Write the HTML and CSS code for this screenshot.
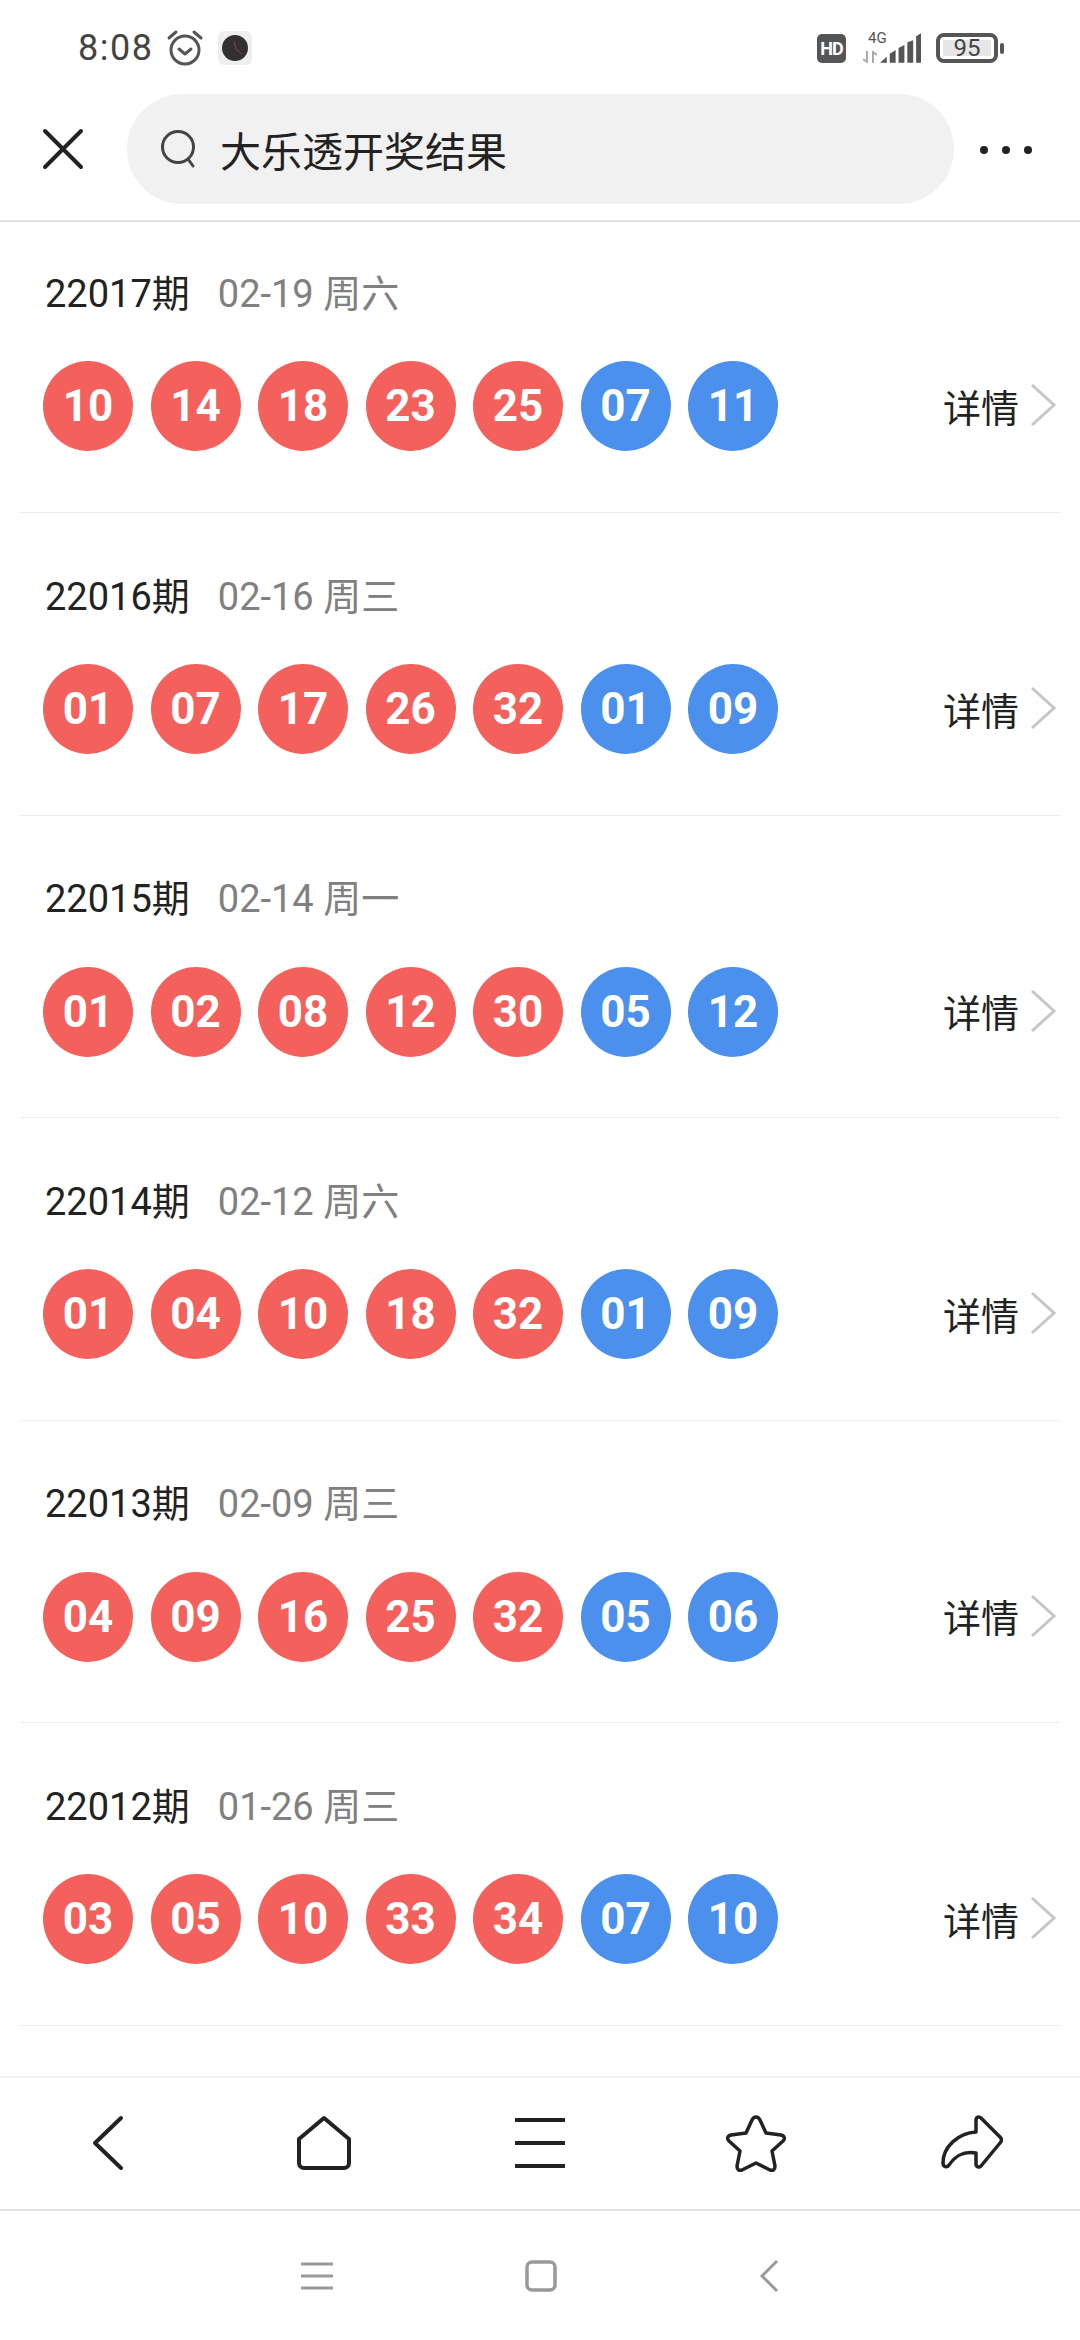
FILE: index.html
```html
<!DOCTYPE html>
<html lang="zh-CN">
<head>
    <meta charset="UTF-8">
    <meta name="viewport" content="width=device-width, initial-scale=1.0">
    <title>大乐透开奖结果</title>
    <link rel="stylesheet" href="styles.css">
</head>
<body>
    <div class="page">
        <!-- Status bar -->
        <div class="status-bar">
            <div class="status-left">
                <span class="clock">8:08</span>
                <svg class="alarm" viewBox="0 0 38 38" fill="none" stroke="#555" stroke-width="3" stroke-linecap="round" stroke-linejoin="round">
                    <circle cx="19" cy="21" r="14"/>
                    <path d="M13 20l6 5 6-5"/>
                    <path d="M3 9l7-6M35 9l-7-6"/>
                </svg>
                <span class="app-icon">
                    <svg class="app-dial" viewBox="0 0 28 28">
                        <circle cx="14" cy="14" r="14" fill="#333034"/>
                        <path d="M13 7l2 8 7 6" fill="none" stroke="#8a4a4a" stroke-width="1"/>
                    </svg>
                </span>
            </div>
            <div class="status-right">
                <span class="hd">HD</span>
                <div class="signal">
                    <span class="net">4G</span>
                    <svg class="arrows" viewBox="0 0 14 12" fill="none" stroke="#aaa" stroke-width="2">
                        <path d="M4 0v11L0 8M10 12V1l4 3"/>
                    </svg>
                    <svg class="bars" viewBox="0 0 42 30" fill="#555">
                        <path d="M0 30l7-6v6zM10 21l6-4v13h-6zM19 15l6-3v18h-6zM28 9l6-2v23h-6zM37 3l5-3v30h-5z"/>
                    </svg>
                </div>
                <div class="battery"><span class="battery-level">95</span></div>
                <span class="battery-nub"></span>
            </div>
        </div>

        <!-- Search header -->
        <div class="top-bar">
            <svg class="close" viewBox="0 0 42 42" fill="none" stroke="#222" stroke-width="4" stroke-linecap="round">
                <path d="M3 3l36 36M39 3L3 39"/>
            </svg>
            <div class="search">
                <svg class="search-icon" viewBox="0 0 38 38" fill="none" stroke="#444" stroke-width="3" stroke-linecap="round">
                    <circle cx="18" cy="17" r="15.5"/>
                    <path d="M28 29l5 7"/>
                </svg>
                <span class="search-text">大乐透开奖结果</span>
            </div>
            <div class="dots"><i></i><i></i><i></i></div>
        </div>

        <!-- Results -->
        <ul class="draws">
            <li class="draw">
                <div class="draw-head"><span class="issue">22017期</span><span class="date">02-19 周六</span></div>
                <div class="draw-body">
                    <div class="balls">
                        <span class="ball">10</span><span class="ball">14</span><span class="ball">18</span><span class="ball">23</span><span class="ball">25</span><span class="ball blue">07</span><span class="ball blue">11</span>
                    </div>
                    <a class="more">详情<svg class="chevron" viewBox="0 0 26 44" fill="none" stroke="#c6c6c6" stroke-width="3"><path d="M2 2l22 20L2 42"/></svg></a>
                </div>
            </li>
            <li class="draw">
                <div class="draw-head"><span class="issue">22016期</span><span class="date">02-16 周三</span></div>
                <div class="draw-body">
                    <div class="balls">
                        <span class="ball">01</span><span class="ball">07</span><span class="ball">17</span><span class="ball">26</span><span class="ball">32</span><span class="ball blue">01</span><span class="ball blue">09</span>
                    </div>
                    <a class="more">详情<svg class="chevron" viewBox="0 0 26 44" fill="none" stroke="#c6c6c6" stroke-width="3"><path d="M2 2l22 20L2 42"/></svg></a>
                </div>
            </li>
            <li class="draw">
                <div class="draw-head"><span class="issue">22015期</span><span class="date">02-14 周一</span></div>
                <div class="draw-body">
                    <div class="balls">
                        <span class="ball">01</span><span class="ball">02</span><span class="ball">08</span><span class="ball">12</span><span class="ball">30</span><span class="ball blue">05</span><span class="ball blue">12</span>
                    </div>
                    <a class="more">详情<svg class="chevron" viewBox="0 0 26 44" fill="none" stroke="#c6c6c6" stroke-width="3"><path d="M2 2l22 20L2 42"/></svg></a>
                </div>
            </li>
            <li class="draw">
                <div class="draw-head"><span class="issue">22014期</span><span class="date">02-12 周六</span></div>
                <div class="draw-body">
                    <div class="balls">
                        <span class="ball">01</span><span class="ball">04</span><span class="ball">10</span><span class="ball">18</span><span class="ball">32</span><span class="ball blue">01</span><span class="ball blue">09</span>
                    </div>
                    <a class="more">详情<svg class="chevron" viewBox="0 0 26 44" fill="none" stroke="#c6c6c6" stroke-width="3"><path d="M2 2l22 20L2 42"/></svg></a>
                </div>
            </li>
            <li class="draw">
                <div class="draw-head"><span class="issue">22013期</span><span class="date">02-09 周三</span></div>
                <div class="draw-body">
                    <div class="balls">
                        <span class="ball">04</span><span class="ball">09</span><span class="ball">16</span><span class="ball">25</span><span class="ball">32</span><span class="ball blue">05</span><span class="ball blue">06</span>
                    </div>
                    <a class="more">详情<svg class="chevron" viewBox="0 0 26 44" fill="none" stroke="#c6c6c6" stroke-width="3"><path d="M2 2l22 20L2 42"/></svg></a>
                </div>
            </li>
            <li class="draw">
                <div class="draw-head"><span class="issue">22012期</span><span class="date">01-26 周三</span></div>
                <div class="draw-body">
                    <div class="balls">
                        <span class="ball">03</span><span class="ball">05</span><span class="ball">10</span><span class="ball">33</span><span class="ball">34</span><span class="ball blue">07</span><span class="ball blue">10</span>
                    </div>
                    <a class="more">详情<svg class="chevron" viewBox="0 0 26 44" fill="none" stroke="#c6c6c6" stroke-width="3"><path d="M2 2l22 20L2 42"/></svg></a>
                </div>
            </li>
        </ul>

        <!-- Browser toolbar -->
        <div class="toolbar">
            <div class="tool">
                <svg class="tool-back" viewBox="0 0 32 56" fill="none" stroke="#222" stroke-width="4" stroke-linecap="round" stroke-linejoin="round"><path d="M29 3L3 28l26 25"/></svg>
            </div>
            <div class="tool">
                <svg class="tool-home" viewBox="0 0 56 56" fill="none" stroke="#222" stroke-width="4" stroke-linejoin="round"><path d="M28 3L3 24v24a5 5 0 0 0 5 5h40a5 5 0 0 0 5-5V24z"/></svg>
            </div>
            <div class="tool">
                <svg class="tool-menu" viewBox="0 0 50 50" fill="none" stroke="#222" stroke-width="4"><path d="M0 2h50M0 25h50M0 48h50"/></svg>
            </div>
            <div class="tool">
                <svg class="tool-star" viewBox="0 0 60 58" fill="none" stroke="#222" stroke-width="3.5" stroke-linejoin="round"><path d="M30 3c2 0 3 1 4 3l6 13 15 2c4 1 4 4 2 6L46 37l3 15c0 4-2 5-5 4l-14-7-14 7c-3 1-5 0-5-4l3-15L3 27c-2-2-2-5 2-6l15-2 6-13c1-2 2-3 4-3z"/></svg>
            </div>
            <div class="tool">
                <svg class="tool-share" viewBox="0 0 62 56" fill="none" stroke="#222" stroke-width="3.5" stroke-linejoin="round"><path d="M35 5c0-3 3-4 5-2l19 19c2 2 2 4 0 6L40 51c-2 2-5 1-5-2v-11c-12-2-20 2-27 12-2 3-6 2-6-2 0-16 15-30 33-31z"/></svg>
            </div>
        </div>

        <!-- System navigation -->
        <div class="nav-bar">
            <svg class="nav-menu" viewBox="0 0 32 28" fill="none" stroke="#999" stroke-width="3"><path d="M0 2h32M0 14h32M0 26h32"/></svg>
            <svg class="nav-square" viewBox="0 0 32 32" fill="none" stroke="#999" stroke-width="3.5"><rect x="2" y="2" width="28" height="28" rx="5"/></svg>
            <svg class="nav-back" viewBox="0 0 20 34" fill="none" stroke="#999" stroke-width="3"><path d="M18 2L3 17l15 15"/></svg>
        </div>
    </div>
</body>
</html>
```

FILE: styles.css
```css
/* General Styles */
* {
    box-sizing: border-box;
}

body {
    margin: 0;
    background-color: #fff;
    font-family: Roboto, "Noto Sans CJK SC", sans-serif;
    color: #222;
}

.page {
    display: flex;
    flex-direction: column;
    width: 1080px;
    height: 2340px;
    overflow: hidden;
}

/* Status bar */
.status-bar {
    display: flex;
    justify-content: space-between;
    align-items: center;
    flex: 0 0 96px;
    padding: 0 76px 0 78px;
    margin-bottom: -6px;
}

.status-left,
.status-right {
    display: flex;
    align-items: center;
}

.clock {
    font-size: 36px;
    letter-spacing: 1.5px;
    color: #444;
}

.alarm {
    width: 38px;
    height: 38px;
    margin-left: 13px;
}

.app-icon {
    display: flex;
    align-items: center;
    justify-content: center;
    width: 34px;
    height: 34px;
    margin-left: 14px;
    border-radius: 6px;
    background-color: #eee;
}

.app-dial {
    width: 26px;
    height: 26px;
}

.hd {
    display: flex;
    align-items: center;
    justify-content: center;
    width: 29px;
    height: 29px;
    border-radius: 5px;
    background-color: #555;
    color: #fff;
    font-size: 18px;
    font-weight: 700;
    letter-spacing: -1px;
}

.signal {
    position: relative;
    width: 58px;
    height: 30px;
    margin-left: 17px;
}

.net {
    position: absolute;
    left: 5px;
    top: -4px;
    font-size: 15px;
    line-height: 18px;
    color: #555;
}

.arrows {
    position: absolute;
    left: 0;
    bottom: 0;
    width: 14px;
    height: 12px;
}

.bars {
    position: absolute;
    right: 0;
    bottom: 0;
    width: 41px;
    height: 30px;
}

.battery {
    display: flex;
    align-items: center;
    justify-content: center;
    width: 62px;
    height: 30px;
    margin-left: 15px;
    padding: 3px;
    border: 4px solid #555;
    border-radius: 8px;
}

.battery-level {
    width: 100%;
    background-color: #e6e6e6;
    text-align: center;
    font-size: 24px;
    line-height: 16px;
    color: #444;
}

.battery-nub {
    width: 4px;
    height: 11px;
    margin-left: 2px;
    border-radius: 2px;
    background-color: #555;
}

/* Search header */
.top-bar {
    display: flex;
    align-items: center;
    flex: 0 0 132px;
    padding-bottom: 12px;
    padding-left: 42px;
    border-bottom: 2px solid #e2e2e2;
}

.close {
    width: 42px;
    height: 42px;
}

.search {
    display: flex;
    align-items: center;
    width: 827px;
    height: 110px;
    margin-left: 43px;
    padding-left: 33px;
    border-radius: 55px;
    background-color: #f1f1f1;
}

.search-icon {
    width: 38px;
    height: 38px;
}

.search-text {
    margin-left: 22px;
    font-size: 41px;
}

.dots {
    display: flex;
    gap: 14px;
    margin-top: 2px;
    margin-left: 26px;
}

.dots i {
    width: 8px;
    height: 8px;
    border-radius: 50%;
    background-color: #222;
}

/* Results */
.draws {
    flex: 1;
    margin: 0;
    padding: 0 21px;
    list-style: none;
    overflow: hidden;
}

.draw {
    height: 302.6px;
    padding-top: 57px;
    border-bottom: 1px solid #ececec;
}

.draw:first-child {
    height: 291px;
    padding-top: 45px;
}

.draw-head {
    display: flex;
    align-items: center;
    gap: 28px;
    padding-left: 24px;
    height: 46px;
    font-size: 38px;
}

.date {
    color: #808080;
}

.draw-body {
    display: flex;
    align-items: center;
    justify-content: space-between;
    margin-top: 48px;
}

.balls {
    display: flex;
    gap: 17.5px;
    padding-left: 22px;
}

.ball {
    display: flex;
    align-items: center;
    justify-content: center;
    width: 90px;
    height: 90px;
    border-radius: 50%;
    background-color: #f4605c;
    color: #fff;
    font-size: 44px;
    font-weight: 700;
}

.ball.blue {
    background-color: #4a90ec;
}

.more {
    display: flex;
    align-items: center;
    gap: 11px;
    margin-bottom: 2px;
    font-size: 38px;
}

.chevron {
    width: 26px;
    height: 44px;
    margin-right: 3px;
}

/* Browser toolbar */
.toolbar {
    display: flex;
    align-items: center;
    flex: 0 0 135px;
    border-top: 2px solid #f1f1f1;
    border-bottom: 2px solid #e2e2e2;
    padding-bottom: 1px;
}

.tool {
    display: flex;
    align-items: center;
    justify-content: center;
    flex: 1;
}

.tool-back {
    width: 32px;
    height: 56px;
}

.tool-home {
    width: 56px;
    height: 56px;
}

.tool-menu {
    width: 50px;
    height: 50px;
}

.tool-star {
    width: 60px;
    height: 58px;
}

.tool-share {
    width: 62px;
    height: 56px;
}

/* System navigation */
.nav-bar {
    display: flex;
    align-items: center;
    justify-content: center;
    flex: 0 0 129px;
}

.nav-menu {
    width: 32px;
    height: 28px;
}

.nav-square {
    width: 32px;
    height: 32px;
    margin-left: 192px;
}

.nav-back {
    width: 20px;
    height: 34px;
    margin-left: 202px;
}
```
